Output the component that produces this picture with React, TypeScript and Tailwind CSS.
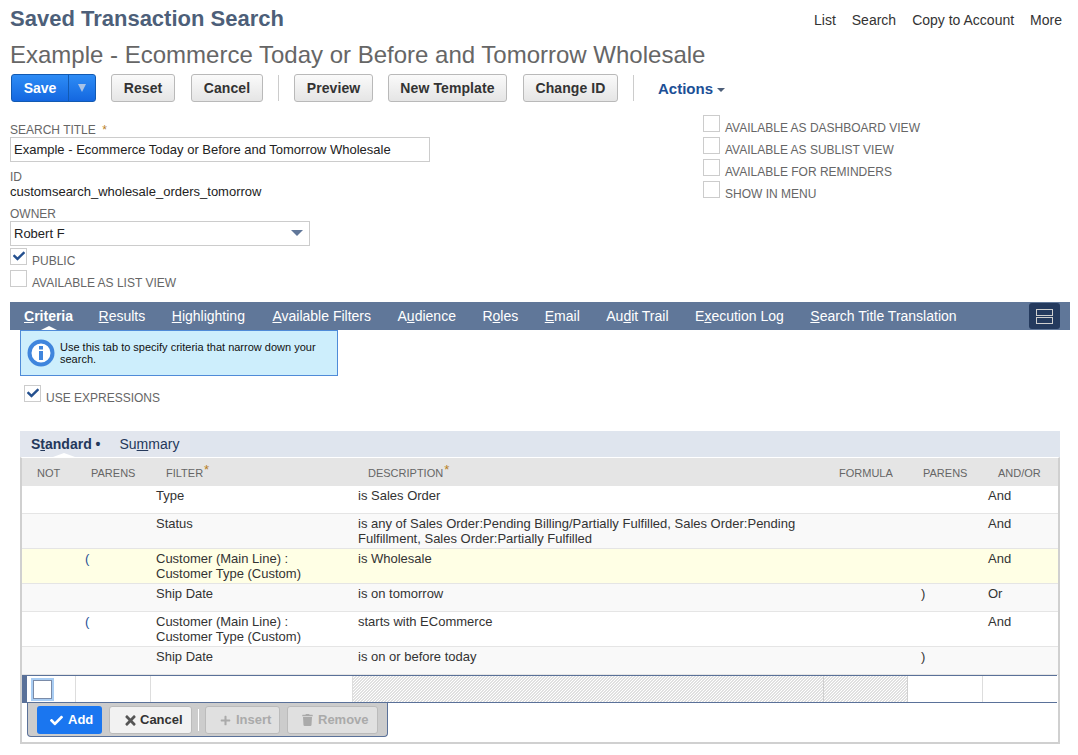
import React from "react";
import { FaCheck, FaTimes, FaPlus, FaTrash } from "react-icons/fa";

function Btn({ label, className = "" }: { label: string; className?: string }) {
  return (
    <button className={"h-7 rounded-[3px] border border-[#b9b9b9] bg-gradient-to-b from-[#fafafa] to-[#e5e5e5] text-[14px] font-bold text-[#333] tracking-[0.1px] flex items-center justify-center " + className}>
      {label}
    </button>
  );
}

function Check({ label, checked = false, className = "" }: { label: string; checked?: boolean; className?: string }) {
  return (
    <div className={"flex h-[22px] items-start " + className}>
      <div className="w-[17px] h-[17px] border border-[#ccc] bg-white flex items-center justify-center shrink-0">
        {checked && <FaCheck className="text-[#24508f] w-[12px] h-[12px] -mt-[2px]" />}
      </div>
      <span className="ml-[5px] mt-[6px] text-[12px] leading-[14px] text-[#666] whitespace-nowrap">{label}</span>
    </div>
  );
}

function Tab({ pre, u, post, bold = false, className = "" }: { pre: string; u: string; post: string; bold?: boolean; className?: string }) {
  return (
    <div className={"relative h-full flex items-center whitespace-nowrap text-white text-[14px] " + (bold ? "font-bold " : "") + className}>
      <span>
        {pre}
        <span className="underline">{u}</span>
        {post}
      </span>
      {bold && (
        <div className="absolute bottom-0 left-[17px] w-0 h-0 border-x-[8px] border-x-transparent border-b-[4px] border-b-white" />
      )}
    </div>
  );
}

const rowGrid = "grid grid-cols-[53px_75px_202px_471px_84px_75px_75px]";

type Row = { h: string; bg: string; open?: string; filter: React.ReactNode; desc: React.ReactNode; close?: string; op?: string };

const rows: Row[] = [
  { h: "h-[28px]", bg: "bg-white", filter: "Type", desc: "is Sales Order", op: "And" },
  {
    h: "h-[35px]",
    bg: "bg-[#f9f9f9]",
    filter: "Status",
    desc: (
      <>
        is any of Sales Order:Pending Billing/Partially Fulfilled, Sales Order:Pending
        <br />
        Fulfillment, Sales Order:Partially Fulfilled
      </>
    ),
    op: "And",
  },
  {
    h: "h-[35px]",
    bg: "bg-[#ffffe5]",
    open: "(",
    filter: (
      <>
        Customer (Main Line) :<br />
        Customer Type (Custom)
      </>
    ),
    desc: "is Wholesale",
    op: "And",
  },
  { h: "h-[28px]", bg: "bg-[#f9f9f9]", filter: "Ship Date", desc: "is on tomorrow", close: ")", op: "Or" },
  {
    h: "h-[35px]",
    bg: "bg-white",
    open: "(",
    filter: (
      <>
        Customer (Main Line) :<br />
        Customer Type (Custom)
      </>
    ),
    desc: "starts with ECommerce",
    op: "And",
  },
  { h: "h-[28px]", bg: "bg-[#f9f9f9]", filter: "Ship Date", desc: "is on or before today", close: ")" },
];

const hatch = "bg-[linear-gradient(135deg,#e0e0e0_25%,#ffffff_25%,#ffffff_50%,#e0e0e0_50%,#e0e0e0_75%,#ffffff_75%)] bg-[length:3px_3px]";

export default function App() {
  return (
    <div className="w-[1078px] h-[755px] overflow-hidden bg-white font-['Liberation_Sans',Arial,sans-serif] text-[#333]">
      {/* header */}
      <div className="flex items-start justify-between pl-[10px] pr-4 pt-[6px] h-[32px]">
        <h1 className="text-[22px] leading-[26px] font-bold text-[#4d5f79]">Saved Transaction Search</h1>
        <div className="flex gap-4 text-[14px] leading-[16px] mt-[6px] text-[#333]">
          <span>List</span>
          <span>Search</span>
          <span>Copy to Account</span>
          <span>More</span>
        </div>
      </div>
      <div className="pl-[10px] pt-[8px] h-[42px] text-[24px] leading-[30px] text-[#666] whitespace-nowrap">
        Example - Ecommerce Today or Before and Tomorrow Wholesale
      </div>

      {/* toolbar */}
      <div className="flex items-center pl-[11px] h-7">
        <div className="flex h-7 w-[85px] rounded-[3px] border border-[#125ab2] bg-gradient-to-b from-[#2e8cf5] to-[#1467e0] text-white text-[14px] font-bold">
          <div className="w-[57px] flex items-center justify-center border-r border-[#125ab2]">Save</div>
          <div className="flex-1 flex items-center justify-center">
            <div className="w-0 h-0 border-x-[4px] border-x-transparent border-t-[8px] border-t-[#a9c3e6]" />
          </div>
        </div>
        <Btn label="Reset" className="ml-[15px] w-[64px]" />
        <Btn label="Cancel" className="ml-[16px] w-[72px]" />
        <div className="ml-[15px] w-px h-[26px] bg-[#ccc]" />
        <Btn label="Preview" className="ml-[15px] w-[79px]" />
        <Btn label="New Template" className="ml-[15px] w-[119px]" />
        <Btn label="Change ID" className="ml-[16px] w-[95px]" />
        <div className="ml-[15px] w-px h-[26px] bg-[#ccc]" />
        <div className="ml-[24px] flex items-center text-[15px] font-bold text-[#1c4f96] mt-[3px]">
          Actions
          <div className="ml-[4px] mt-[1px] w-0 h-0 border-x-[4px] border-x-transparent border-t-[4px] border-t-[#4d5f79]" />
        </div>
      </div>

      {/* form */}
      <div className="flex pl-[10px] h-[200px]">
        <div className="w-[693px] pt-[21px]">
          <div className="text-[12px] leading-[14px] text-[#666] h-[14px] whitespace-nowrap">
            SEARCH TITLE <span className="ml-[3px] text-[#b8801f]">*</span>
          </div>
          <div className="w-[420px] h-[25px] border border-[#ccc] flex items-center pl-[3px] text-[13px] text-[#222]">
            Example - Ecommerce Today or Before and Tomorrow Wholesale
          </div>
          <div className="mt-[8px] text-[12px] leading-[14px] text-[#666]">ID</div>
          <div className="text-[13px] leading-[16px] text-[#222]">customsearch_wholesale_orders_tomorrow</div>
          <div className="mt-[7px] text-[12px] leading-[14px] text-[#666]">OWNER</div>
          <div className="relative w-[300px] h-[25px] border border-[#ccc] flex items-center pl-[3px] text-[13px] text-[#222]">
            Robert F
            <div className="absolute right-[6px] top-[8px] w-0 h-0 border-x-[6px] border-x-transparent border-t-[6px] border-t-[#607799]" />
          </div>
          <Check label="PUBLIC" checked className="mt-[2px]" />
          <Check label="AVAILABLE AS LIST VIEW" />
        </div>
        <div className="pt-[13px]">
          <Check label="AVAILABLE AS DASHBOARD VIEW" />
          <Check label="AVAILABLE AS SUBLIST VIEW" />
          <Check label="AVAILABLE FOR REMINDERS" />
          <Check label="SHOW IN MENU" />
        </div>
      </div>

      {/* main tabs */}
      <div className="ml-[10px] w-[1060px] h-[28px] bg-[#607799] flex items-center pl-[14px] gap-[26.5px] relative">
        <Tab pre="" u="C" post="riteria" bold />
        <Tab pre="" u="R" post="esults" className="-ml-px" />
        <Tab pre="" u="H" post="ighlighting" />
        <Tab pre="" u="A" post="vailable Filters" className="ml-px" />
        <Tab pre="A" u="u" post="dience" />
        <Tab pre="R" u="o" post="les" />
        <Tab pre="" u="E" post="mail" />
        <Tab pre="Au" u="d" post="it Trail" />
        <Tab pre="E" u="x" post="ecution Log" />
        <Tab pre="" u="S" post="earch Title Translation" />
        <div className="absolute right-[10px] top-px w-[31px] h-[26px] rounded-[3px] bg-[#243a5e] flex flex-col items-center justify-center gap-[1px]">
          <div className="w-[17px] h-[7px] border border-[#cfcfcf]" />
          <div className="w-[17px] h-[7px] border border-[#cfcfcf]" />
        </div>
      </div>

      {/* info */}
      <div className="ml-[20px] w-[318px] h-[46px] border border-[#4f8bd8] bg-[#cdeefc] flex items-center pl-[6px]">
        <svg width="28" height="28" viewBox="0 0 28 28" className="shrink-0">
          <circle cx="14" cy="14" r="11.5" fill="#fff" stroke="#3f85dd" strokeWidth="4" />
          <rect x="12" y="12" width="4" height="9" fill="#3f85dd" />
          <rect x="12" y="7" width="4" height="3.5" fill="#3f85dd" />
        </svg>
        <div className="ml-[5px] text-[11px] leading-[12px] text-[#111] -mt-px whitespace-nowrap">
          Use this tab to specify criteria that narrow down your
          <br />
          search.
        </div>
      </div>

      <Check label="USE EXPRESSIONS" checked className="ml-[24px] mt-[9px]" />

      {/* sub tabs */}
      <div className="ml-[20px] mt-[24px] w-[1040px] h-[26px] bg-[#dfe5ee] flex">
        <div className="w-[170px] h-full bg-[#e2e6ee] flex items-center pl-[11px] text-[14px] text-[#24385b] relative">
          <span className="font-bold whitespace-nowrap">
            S<span className="underline">t</span>andard •
          </span>
          <span className="ml-[19px] whitespace-nowrap">
            Su<span className="underline">m</span>mary
          </span>
          <div className="absolute bottom-0 left-[33px] w-0 h-0 border-x-[11px] border-x-transparent border-b-[4px] border-b-white" />
        </div>
      </div>

      {/* table */}
      <div className="ml-[20px] w-[1040px] h-[287px] border-x-2 border-b-2 border-[#d0d0d0] border-t border-t-white">
        <div className={rowGrid + " h-[28px] pt-[2px] bg-[#e5e5e5] text-[11px] text-[#666] items-center"}>
          <div className="pl-[15px]">NOT</div>
          <div className="pl-4">PARENS</div>
          <div className="pl-4">
            FILTER<span className="relative -top-[3px] ml-px text-[#b8801f] text-[13px]">*</span>
          </div>
          <div className="pl-4">
            DESCRIPTION<span className="relative -top-[3px] ml-px text-[#b8801f] text-[13px]">*</span>
          </div>
          <div className="pl-4">FORMULA</div>
          <div className="pl-4">PARENS</div>
          <div className="pl-4">AND/OR</div>
        </div>
        {rows.map((r, i) => (
          <div key={i} className={rowGrid + " " + r.h + " " + r.bg + " border-b border-[#e5e5e5] pt-[2px] text-[13px] leading-[15px] text-[#333]"}>
            <div />
            <div className="pl-[10px] text-[#1c4f96]">{r.open}</div>
            <div className="pl-[6px] whitespace-nowrap">{r.filter}</div>
            <div className="pl-[6px] whitespace-nowrap">{r.desc}</div>
            <div />
            <div className="pl-[14px]">{r.close}</div>
            <div className="pl-[6px]">{r.op}</div>
          </div>
        ))}
        {/* entry row */}
        <div className="grid grid-cols-[54px_75px_202px_471px_84px_75px_1fr] h-[28px] border-y border-[#5a7199] w-[1035px]">
          <div className="border-r border-[#ddd] border-l-[5px] border-l-[#5a7199] flex items-center pl-[6px]">
            <div className="w-[19px] h-[19px] border border-[#7a8ba8] bg-white shadow-[0_0_0_2px_#a9cdf3]" />
          </div>
          <div className="border-r border-[#ddd]" />
          <div className="border-r border-[#ddd]" />
          <div className={"border-r border-[#d0d0d0] " + hatch} />
          <div className={"border-r border-[#d0d0d0] " + hatch} />
          <div className="border-r border-[#ddd]" />
          <div />
        </div>
        {/* machine buttons */}
        <div className="ml-[5px] w-[361px] h-[34px] bg-[#cccccc] border border-t-0 border-[#5a7199] rounded-b-[4px] flex items-start pt-[3px] pl-[9px] text-[13px] font-bold">
          <button className="w-[65px] h-[28px] rounded-[3px] bg-[#1a76f0] text-white flex items-center pl-[13px] gap-[5px]">
            <FaCheck className="w-[13px] h-[13px]" />
            Add
          </button>
          <button className="ml-[7px] w-[83px] h-[28px] rounded-[3px] border border-[#bbb] bg-[#f2f2f2] text-[#333] flex items-center pl-[15px] gap-[4px]">
            <FaTimes className="w-[11px] h-[15px] text-[#555]" />
            Cancel
          </button>
          <div className="ml-[6px] mt-[3px] w-px h-[22px] bg-white" />
          <button className="ml-[6px] w-[75px] h-[28px] rounded-[3px] border border-[#bbb] bg-[#e0e0e0] text-[#aaa] flex items-center pl-[14px] gap-[5px]">
            <FaPlus className="w-[11px] h-[11px]" />
            Insert
          </button>
          <button className="ml-[7px] w-[91px] h-[28px] rounded-[3px] border border-[#bbb] bg-[#e0e0e0] text-[#aaa] flex items-center pl-[14px] gap-[5px]">
            <FaTrash className="w-[11px] h-[12px]" />
            Remove
          </button>
        </div>
      </div>
    </div>
  );
}
